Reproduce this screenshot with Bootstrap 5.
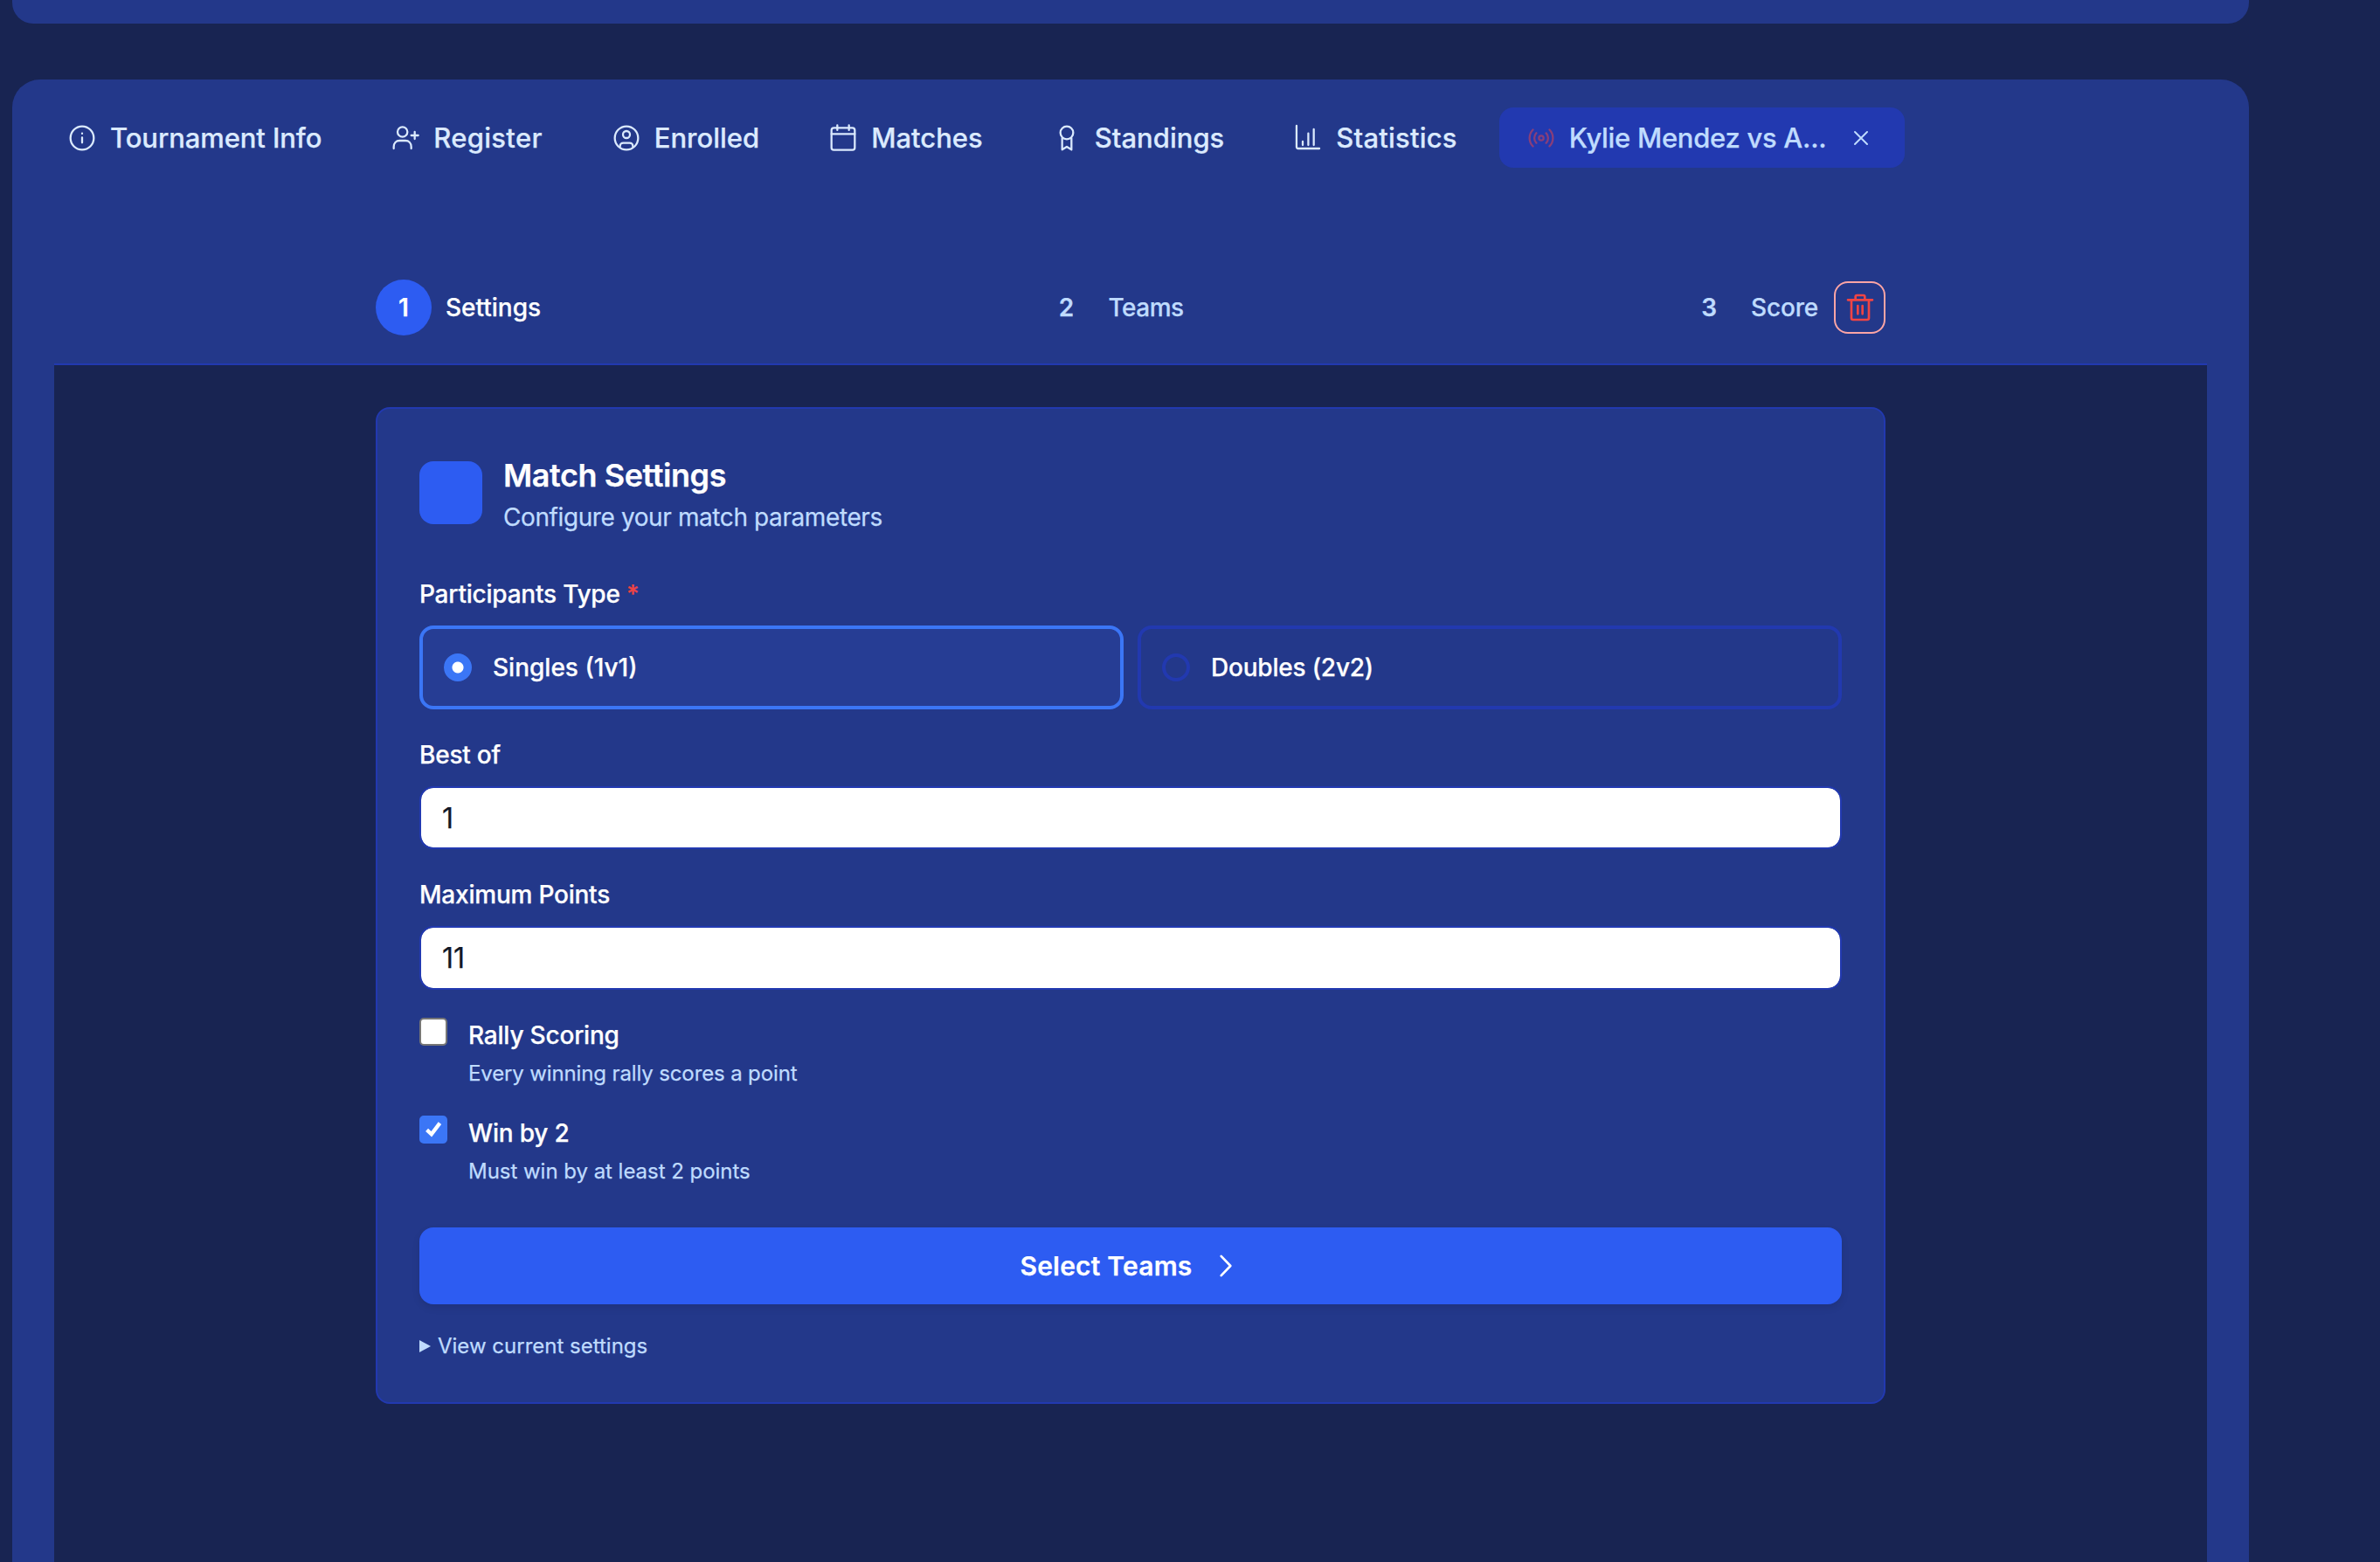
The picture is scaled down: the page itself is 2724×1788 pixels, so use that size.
<!DOCTYPE html>
<html lang="en">
<head>
<meta charset="utf-8">
<title>Match Settings</title>
<link href="https://cdn.jsdelivr.net/npm/bootstrap@5.3.0/dist/css/bootstrap.min.css" rel="stylesheet">
<style>
html,body{height:100%;overflow:hidden}
body{background:#182452;font-family:Inter,"Liberation Sans",sans-serif;color:#fff;font-size:28px;line-height:40px;-webkit-text-stroke:.25px currentColor}
.pg-top{height:27px;width:2560px;margin-left:14px;background:#23388a;border-radius:0 0 24px 24px}
.pg-main{width:2560px;margin:64px 0 0 14px;background:#23388a;border-radius:32px 32px 0 0;padding-top:32px;height:1697px}
.tab-row{padding:0 32px;gap:16px}
.tab-row .nav-link{display:flex;align-items:center;gap:16px;padding:16px 32px;height:69px;font-size:31px;font-weight:500;line-height:37px;color:#dbeafe;border-radius:16px;white-space:nowrap}
.tab-row .nav-link.active{background:#2239b0;color:#bfdbfe;padding-right:38px;letter-spacing:-.3px}
.tab-row .nav-link svg{flex:none}
.tx-info{letter-spacing:-.1px}
.tx-reg{letter-spacing:.3px}
.tx-stat{letter-spacing:.2px}
.ic{width:32px;height:32px;fill:none;stroke:currentColor;stroke-width:1.7;stroke-linecap:round;stroke-linejoin:round}
.ic-live{color:#ef4444;opacity:.5}
.tab-row .nav-link .ic-close{width:24px;height:24px;margin-left:12px;stroke-width:2;color:#bfdbfe}
.step-head{margin:128px 48px 0;padding-bottom:32px;border-bottom:2px solid #2239b0}
.step-inner{width:1728px;margin:0 auto;display:flex;align-items:center}
.step-list{flex:1;display:flex;justify-content:space-between}
.step-item{display:flex;align-items:center;gap:16px;font-weight:500;color:#bfdbfe}
.tx-teams{letter-spacing:-.5px}
.tx-score{letter-spacing:-.2px}
.step-num{width:64px;height:64px;border-radius:50%;display:flex;align-items:center;justify-content:center;font-weight:600;letter-spacing:0}
.step-item.on{color:#fff}
.step-item.on .step-num{background:#2d5cf2}
.btn-trash{width:59px;height:60px;margin-left:18px;padding:0;display:flex;align-items:center;justify-content:center;border:2px solid #fca5a5;border-radius:16px;background:transparent;color:#ef4444}
.btn-trash:hover{border-color:#fca5a5;background:transparent;color:#ef4444}
.btn-trash .ic{stroke-width:2}
.panel-dark{margin:0 48px;background:#182452;padding-top:48px;height:1400px}
.set-card{width:1728px;margin:0 auto;background:#23388a;border:2px solid #2239b0;border-radius:16px;padding:48px;color:#fff}
.set-head{gap:24px;margin-bottom:48px;height:96px}
.set-icon{width:72px;height:72px;background:#2d5cf2;border-radius:16px;flex:none}
.set-text{padding-top:2px}
.set-title{font-size:36px;line-height:54px;font-weight:600;margin:0;letter-spacing:-.43px}
.set-sub{font-size:28px;line-height:42px;color:#bfdbfe;margin:0;letter-spacing:-.4px}
.fld-label{display:block;font-size:28px;line-height:40px;font-weight:500;margin-bottom:16px;letter-spacing:-.22px}
.req{color:#ef4444}
.opt-row{gap:16px;margin-bottom:32px}
.opt-box{flex:1 1 0;height:96px;display:flex;align-items:center;gap:24px;padding:0 24px;border:4px solid #2239b0;border-radius:16px;font-weight:500;margin:0}
.opt-box.sel{border-color:#3b76f6;background:#263d94}
.tx-dbl{letter-spacing:-.2px}
.opt-box .form-check-input{width:32px;height:32px;margin:0;flex:none;background-color:transparent;border:4px solid #2239b0}
.opt-box .form-check-input:checked[type=radio]{background-color:#3b76f6;border-color:#3b76f6;background-image:radial-gradient(circle,#fff 6px,transparent 7px);background-size:auto}
.num-field{height:72px;font-size:32px;line-height:40px;padding:0 24px;border:2px solid #2239b0;border-radius:16px;margin-bottom:32px;color:#111827}
.num-tall{height:73px}
.chk-row{display:flex;gap:24px;padding:0;margin-bottom:32px;min-height:0}
.chk-row .form-check-input{width:32px;height:32px;margin:0;float:none;flex:none;border:2px solid #767676;border-radius:5px}
.chk-row .form-check-input:checked[type=checkbox]{background-color:#3b76f6;border-color:#3b76f6;background-size:100% 100%;background-image:url("data:image/svg+xml,%3csvg xmlns='http://www.w3.org/2000/svg' viewBox='0 0 32 32'%3e%3cpath fill='none' stroke='%23fff' stroke-width='5' d='M7.500 16.500l6 5.500L24.500 7.500'/%3e%3c/svg%3e")}
.chk-name{font-weight:500;line-height:40px;display:block;margin-bottom:8px;letter-spacing:-.2px}
.chk-desc{font-size:24px;line-height:32px;color:#bfdbfe;display:block;letter-spacing:-.13px}
.chk-desc.tx-must{letter-spacing:-.03px}
.btn-go{height:88px;margin-top:48px;font-size:30px;font-weight:600;letter-spacing:.2px;background:#2d5cf2;border:0;border-radius:16px;gap:24px;box-shadow:0 4px 8px rgba(0,0,0,.1)}
.btn-go:hover{background:#2d5cf2}
.btn-go .ic{stroke-width:2}
.cur-set{margin-top:32px;font-size:24px;line-height:32px;color:#bfdbfe}
.cur-set summary{list-style:none;display:flex;align-items:center;gap:8px}
.cur-set summary::-webkit-details-marker{display:none}
.cur-set summary::before{content:"";flex:none;border-left:13px solid currentColor;border-top:7.500px solid transparent;border-bottom:7.500px solid transparent}
</style>
</head>
<body>
<div class="pg-top"></div>
<div class="pg-main">
  <ul class="nav nav-pills tab-row">
    <li class="nav-item"><a class="nav-link" href="#"><svg class="ic" viewBox="0 0 24 24"><circle cx="12" cy="12" r="10"/><path d="M12 11.500v4.500M12 8v.2"/></svg><span class="tx-info">Tournament Info</span></a></li>
    <li class="nav-item"><a class="nav-link" href="#"><svg class="ic" viewBox="0 0 24 24"><circle cx="9.500" cy="6.750" r="4.250"/><path d="M2 21v-1.500c0-3 2-5.250 5-5.250h5c3 0 5 2.250 5 5.250V21M20 6.750v6M17 9.750h6"/></svg><span class="tx-reg">Register</span></a></li>
    <li class="nav-item"><a class="nav-link" href="#"><svg class="ic" viewBox="0 0 24 24"><circle cx="12" cy="12" r="10"/><circle cx="12" cy="9" r="3"/><path d="M6.500 19.500v-.7c0-1.500 1.200-2.600 2.700-2.600h5.600c1.500 0 2.700 1.100 2.700 2.600v.7"/></svg>Enrolled</a></li>
    <li class="nav-item"><a class="nav-link" href="#"><svg class="ic" viewBox="0 0 24 24"><rect x="2" y="3.200" width="20" height="19" rx="2"/><path d="M7 1v4.200M17 1v4.200M2 8.500h20"/></svg>Matches</a></li>
    <li class="nav-item"><a class="nav-link" href="#"><svg class="ic" viewBox="0 0 24 24"><circle cx="12" cy="7.500" r="5.500"/><path d="M8 12.200V22l4-2.500 4 2.500v-9.800"/></svg>Standings</a></li>
    <li class="nav-item"><a class="nav-link" href="#"><svg class="ic" viewBox="0 0 24 24"><path d="M2.200 1.500V19.500a1.500 1.500 0 0 0 1.500 1.500H21.800M7.500 15v3M12.300 8v10M17 4.500V18"/></svg><span class="tx-stat">Statistics</span></a></li>
    <li class="nav-item"><a class="nav-link active" href="#"><svg class="ic ic-live" viewBox="0 0 24 24"><path d="M4.900 19.100C1 15.200 1 8.800 4.900 4.900M7.800 16.200c-2.300-2.300-2.300-6.100 0-8.500M16.200 7.800c2.300 2.300 2.300 6.100 0 8.500M19.100 4.900C23 8.800 23 15.100 19.100 19"/><circle cx="12" cy="12" r="2"/></svg>Kylie Mendez vs A...<svg class="ic ic-close" viewBox="0 0 24 24"><path d="M5 5l14 14M19 5L5 19"/></svg></a></li>
  </ul>
  <div class="step-head">
    <div class="step-inner">
      <div class="step-list">
        <div class="step-item on"><span class="step-num">1</span><span>Settings</span></div>
        <div class="step-item"><span class="step-num">2</span><span class="tx-teams">Teams</span></div>
        <div class="step-item"><span class="step-num">3</span><span class="tx-score">Score</span></div>
      </div>
      <button class="btn btn-trash" type="button" aria-label="Delete"><svg class="ic" viewBox="0 0 24 24"><path d="M1.500 5.500h21M4.500 5.500V21a1.500 1.500 0 0 0 1.500 1.500h12a1.500 1.500 0 0 0 1.500-1.500V5.500M8 5.500V2.700A1.200 1.200 0 0 1 9.200 1.500h5.600A1.200 1.200 0 0 1 16 2.700v2.800M10 10.500v7M14 10.500v7"/></svg></button>
    </div>
  </div>
  <div class="panel-dark">
    <div class="set-card">
      <div class="d-flex align-items-center set-head">
        <div class="set-icon"></div>
        <div class="set-text"><h2 class="set-title">Match Settings</h2><p class="set-sub">Configure your match parameters</p></div>
      </div>
      <label class="fld-label">Participants Type <span class="req">*</span></label>
      <div class="d-flex opt-row">
        <label class="opt-box sel"><input class="form-check-input" type="radio" name="ptype" checked>Singles (1v1)</label>
        <label class="opt-box"><input class="form-check-input" type="radio" name="ptype"><span class="tx-dbl">Doubles (2v2)</span></label>
      </div>
      <label class="fld-label" for="bestof">Best of</label>
      <input id="bestof" class="form-control num-field" type="text" value="1">
      <label class="fld-label" for="maxpts">Maximum Points</label>
      <input id="maxpts" class="form-control num-field num-tall" type="text" value="11">
      <div class="form-check chk-row">
        <input class="form-check-input" type="checkbox" id="rally">
        <label for="rally"><span class="chk-name">Rally Scoring</span><span class="chk-desc">Every winning rally scores a point</span></label>
      </div>
      <div class="form-check chk-row mb-0">
        <input class="form-check-input" type="checkbox" id="winby" checked>
        <label for="winby"><span class="chk-name">Win by 2</span><span class="chk-desc tx-must">Must win by at least 2 points</span></label>
      </div>
      <button class="btn btn-primary btn-go w-100 d-flex align-items-center justify-content-center" type="button">Select Teams<svg class="ic" viewBox="0 0 24 24"><path d="M6.500 3.700l8 8.300-8 8.300"/></svg></button>
      <details class="cur-set"><summary>View current settings</summary></details>
    </div>
  </div>
</div>
<script src="https://cdn.jsdelivr.net/npm/bootstrap@5.3.0/dist/js/bootstrap.bundle.min.js"></script>
</body>
</html>
